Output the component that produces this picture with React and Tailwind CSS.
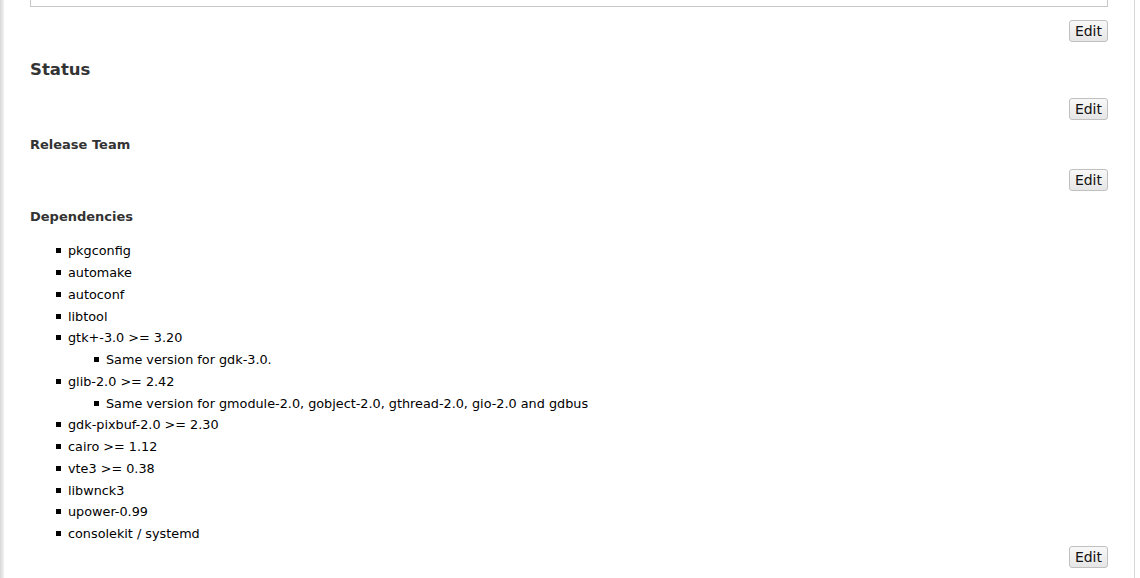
import React from "react";

function EditButton() {
  return (
    <div className="flex justify-end">
      <button className="h-[22px] px-[5px] rounded-[3px] border border-[#c0c0c0] bg-gradient-to-b from-[#f8f8f8] to-[#e6e6e6] text-[14px] leading-none text-[#111]">
        Edit
      </button>
    </div>
  );
}

function Item({ children, nested }) {
  return (
    <li className="flex flex-col">
      <div className="flex items-center h-[21.75px]">
        <span className="w-[5px] h-[5px] bg-black mr-[7px] shrink-0" />
        <span>{children}</span>
      </div>
      {nested && (
        <ul className="pl-[38px]">
          <li className="flex items-center h-[21.75px]">
            <span className="w-[5px] h-[5px] bg-black mr-[7px] shrink-0" />
            <span>{nested}</span>
          </li>
        </ul>
      )}
    </li>
  );
}

export default function App() {
  return (
    <div
      className="w-[1140px] h-[578px] bg-white flex overflow-hidden text-[12.8px] text-black"
      style={{ fontFamily: '"DejaVu Sans", sans-serif' }}
    >
      <div className="w-[4px] bg-gradient-to-r from-[#d8d8d8] to-[#f2f2f2] shrink-0" />
      <div className="w-[1131px] border-r border-[#d8d8d8] pl-[26px] pr-[26px] flex flex-col">
        <div className="h-[7px] border border-t-0 border-[#c8c8c8]" />
        <div className="mt-[13px]">
          <EditButton />
        </div>
        <h2 className="mt-[18px] text-[16.5px] font-bold text-[#333] leading-[20px]">Status</h2>
        <div className="mt-[18px]">
          <EditButton />
        </div>
        <h3 className="mt-[17px] text-[13px] font-bold text-[#333] leading-[16px]">Release Team</h3>
        <div className="mt-[16px]">
          <EditButton />
        </div>
        <h3 className="mt-[18px] text-[13px] font-bold text-[#333] leading-[16px]">Dependencies</h3>
        <ul className="mt-[15px] pl-[26px]">
          <Item>pkgconfig</Item>
          <Item>automake</Item>
          <Item>autoconf</Item>
          <Item>libtool</Item>
          <Item nested="Same version for gdk-3.0.">gtk+-3.0 &gt;= 3.20</Item>
          <Item nested="Same version for gmodule-2.0, gobject-2.0, gthread-2.0, gio-2.0 and gdbus">
            glib-2.0 &gt;= 2.42
          </Item>
          <Item>gdk-pixbuf-2.0 &gt;= 2.30</Item>
          <Item>cairo &gt;= 1.12</Item>
          <Item>vte3 &gt;= 0.38</Item>
          <Item>libwnck3</Item>
          <Item>upower-0.99</Item>
          <Item>consolekit / systemd</Item>
        </ul>
        <div className="mt-[1px]">
          <EditButton />
        </div>
      </div>
    </div>
  );
}
